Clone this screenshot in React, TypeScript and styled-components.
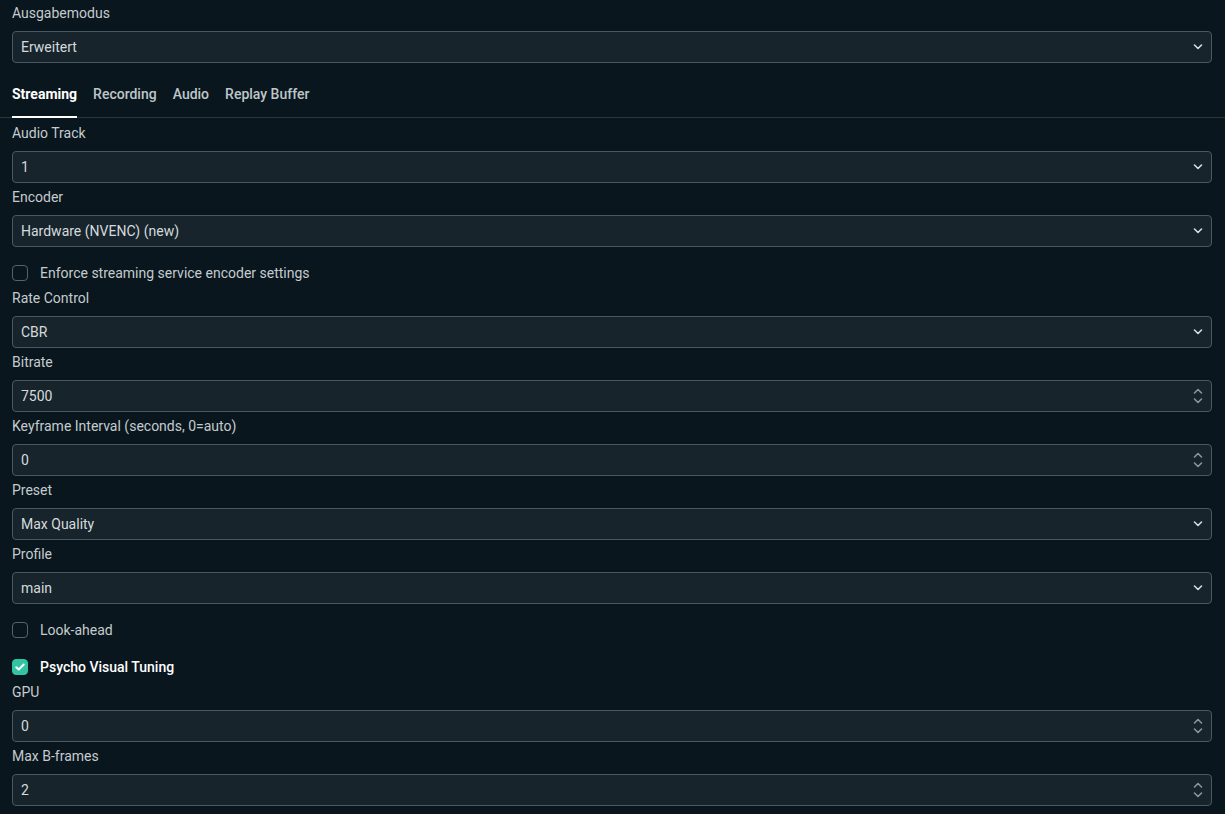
import React, { useState } from "react"
import styled, { createGlobalStyle } from "styled-components"

const GlobalStyle = createGlobalStyle`
  html, body {
    margin: 0;
    padding: 0;
    background: #09161d;
  }
  body {
    font-family: Roboto, "Noto Sans", "Liberation Sans", sans-serif;
    font-size: 14px;
    color: #c5cbce;
  }
`

const Page = styled.div`
  display: flex;
  flex-direction: column;
  padding: 3px 13px 20px 12px;
  min-height: 814px;
  box-sizing: border-box;
  background: #09161d;
`

const Field = styled.div`
  margin-bottom: 4px;
`

const Label = styled.div`
  line-height: 20px;
  height: 20px;
  margin-bottom: 8px;
  color: #c5cbce;
`

const Box = styled.div`
  position: relative;
  height: 32px;
  box-sizing: border-box;
  border: 1px solid #4a575e;
  border-radius: 4px;
  background: #17242c;
  display: flex;
  align-items: center;
  padding: 0 28px 0 8px;
  color: #d5dadc;
`

const Arrow = styled.span`
  position: absolute;
  right: 8px;
  top: 0;
  bottom: 0;
  display: flex;
  flex-direction: column;
  justify-content: center;
  gap: 2px;
`

const TabBar = styled.div`
  display: flex;
  gap: 16px;
  margin: 8px -13px 5px -12px;
  padding-left: 12px;
  border-bottom: 1px solid #2a383e;
`

const Tab = styled.div<{ active?: boolean }>`
  padding: 9px 0 12px;
  line-height: 20px;
  font-weight: ${({ active }) => (active ? 700 : 500)};
  color: ${({ active }) => (active ? "#ffffff" : "#bfc6c9")};
  border-bottom: 2px solid ${({ active }) => (active ? "#ffffff" : "transparent")};
  margin-bottom: -1px;
  cursor: pointer;
`

const CheckRow = styled.label`
  display: flex;
  align-items: center;
  gap: 12px;
  height: 20px;
  margin: 12px 0 5px;
  cursor: pointer;
`

const CheckBox = styled.span<{ checked?: boolean }>`
  width: 16px;
  height: 16px;
  box-sizing: border-box;
  border-radius: 4px;
  border: 1px solid ${({ checked }) => (checked ? "#31c3a2" : "#56636a")};
  background: ${({ checked }) => (checked ? "#31c3a2" : "transparent")};
  display: flex;
  align-items: center;
  justify-content: center;
`

const CheckText = styled.span<{ checked?: boolean }>`
  line-height: 20px;
  font-weight: ${({ checked }) => (checked ? 500 : 400)};
  color: ${({ checked }) => (checked ? "#ffffff" : "#c5cbce")};
`

const Chevron = ({ up }: { up?: boolean }) => (
  <svg width="10" height="6" viewBox="0 0 10 6" style={{ display: "block" }}>
    <path
      d={up ? "M1.5 5L5 1.5L8.5 5" : "M1.5 1L5 4.5L8.5 1"}
      fill="none"
      stroke="currentColor"
      strokeWidth="1.6"
      strokeLinecap="round"
      strokeLinejoin="round"
    />
  </svg>
)

const SelectArrow = styled(Arrow)`
  color: #d7dcde;
`

const SpinArrow = styled(Arrow)`
  color: #8a969b;
  gap: 4px;
`

const SelectField = ({ label, value }: { label: string; value: string }) => (
  <Field>
    <Label>{label}</Label>
    <Box>
      {value}
      <SelectArrow>
        <Chevron />
      </SelectArrow>
    </Box>
  </Field>
)

const NumberField = ({ label, value }: { label: string; value: string }) => (
  <Field>
    <Label>{label}</Label>
    <Box>
      {value}
      <SpinArrow>
        <Chevron up />
        <Chevron />
      </SpinArrow>
    </Box>
  </Field>
)

const Check = ({ label, checked }: { label: string; checked?: boolean }) => (
  <CheckRow>
    <CheckBox checked={checked}>
      {checked && (
        <svg width="10" height="8" viewBox="0 0 10 8">
          <path
            d="M1.3 4.2L3.8 6.5L8.7 1.5"
            fill="none"
            stroke="#ffffff"
            strokeWidth="2"
            strokeLinecap="round"
            strokeLinejoin="round"
          />
        </svg>
      )}
    </CheckBox>
    <CheckText checked={checked}>{label}</CheckText>
  </CheckRow>
)

const tabs = ["Streaming", "Recording", "Audio", "Replay Buffer"]

export default function App() {
  const [tab, setTab] = useState("Streaming")
  return (
    <Page>
      <GlobalStyle />
      <SelectField label="Ausgabemodus" value="Erweitert" />
      <TabBar>
        {tabs.map(t => (
          <Tab key={t} active={t === tab} onClick={() => setTab(t)}>
            {t}
          </Tab>
        ))}
      </TabBar>
      <SelectField label="Audio Track" value="1" />
      <SelectField label="Encoder" value="Hardware (NVENC) (new)" />
      <Check label="Enforce streaming service encoder settings" />
      <SelectField label="Rate Control" value="CBR" />
      <NumberField label="Bitrate" value="7500" />
      <NumberField label="Keyframe Interval (seconds, 0=auto)" value="0" />
      <SelectField label="Preset" value="Max Quality" />
      <SelectField label="Profile" value="main" />
      <Check label="Look-ahead" />
      <Check label="Psycho Visual Tuning" checked />
      <NumberField label="GPU" value="0" />
      <NumberField label="Max B-frames" value="2" />
    </Page>
  )
}
